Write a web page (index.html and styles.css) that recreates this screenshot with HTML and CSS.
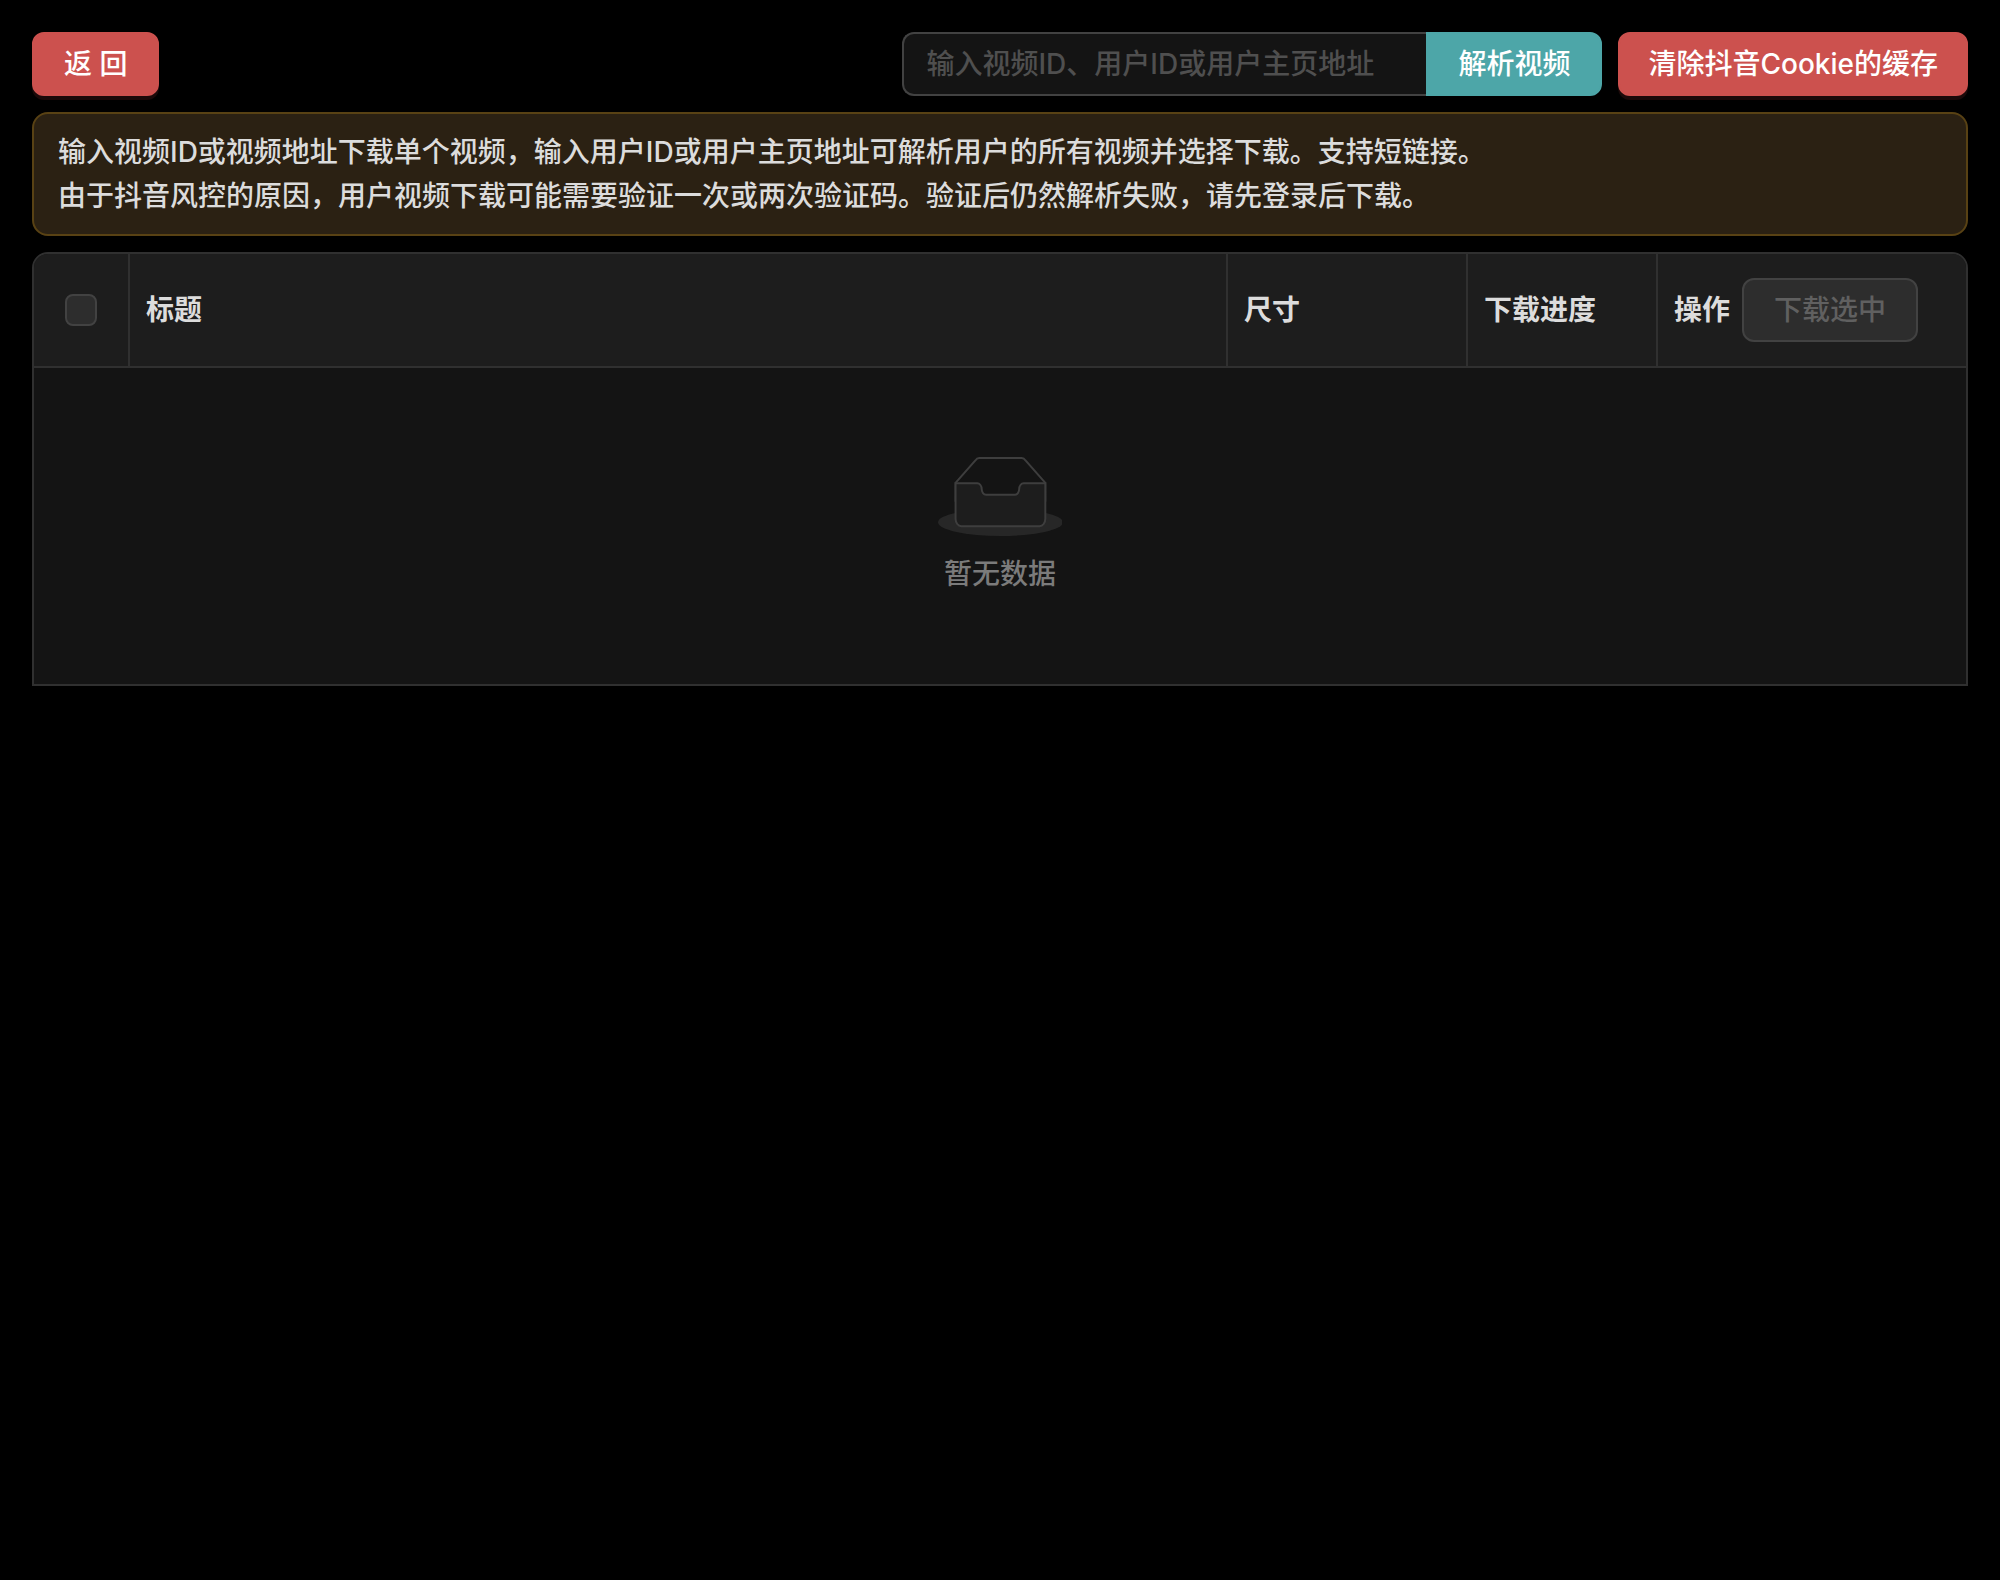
FILE: index.html
```
<!DOCTYPE html>
<html lang="zh-CN">
<head>
<meta charset="utf-8">
<meta name="viewport" content="width=device-width, initial-scale=1">
<title>抖音视频下载</title>
<link rel="stylesheet" href="styles.css">
</head>
<body>
<main class="page">
  <header class="toolbar">
    <button class="btn btn-danger" type="button">返 回</button>
    <form class="search">
      <input class="search-input" type="text" aria-label="视频地址" placeholder="输入视频ID、用户ID或用户主页地址">
      <button class="btn btn-primary" type="button">解析视频</button>
    </form>
    <button class="btn btn-danger btn-long" type="button">清除抖音Cookie的缓存</button>
  </header>

  <div class="alert" role="alert">
    <p>输入视频ID或视频地址下载单个视频，输入用户ID或用户主页地址可解析用户的所有视频并选择下载。支持短链接。</p>
    <p>由于抖音风控的原因，用户视频下载可能需要验证一次或两次验证码。验证后仍然解析失败，请先登录后下载。</p>
  </div>

  <div class="table-wrap">
    <table class="table">
      <colgroup>
        <col class="col-select">
        <col>
        <col class="col-size">
        <col class="col-progress">
        <col class="col-action">
      </colgroup>
      <thead>
        <tr>
          <th class="cell-select"><input class="checkbox" type="checkbox" aria-label="全选" disabled></th>
          <th>标题</th>
          <th>尺寸</th>
          <th>下载进度</th>
          <th>
            <div class="action">
              <span>操作</span>
              <button class="btn btn-disabled" type="button" disabled>下载选中</button>
            </div>
          </th>
        </tr>
      </thead>
      <tbody>
        <tr>
          <td class="empty" colspan="5">
            <svg class="empty-image" viewBox="0 0 64 41" aria-hidden="true">
              <g transform="translate(0 1)" fill="none" fill-rule="evenodd">
                <ellipse fill="#272727" cx="32" cy="33" rx="32" ry="7"/>
                <g fill-rule="nonzero" stroke="#3e3e3e">
                  <path d="M55 12.76L44.854 1.258C44.367.474 43.656 0 42.907 0H21.093c-.749 0-1.46.474-1.947 1.257L9 12.761V22h46v-9.24z"/>
                  <path d="M41.613 15.931c0-1.605.994-2.93 2.227-2.931H55v18.137C55 33.26 53.68 35 52.05 35h-40.1C10.32 35 9 33.259 9 31.137V13h11.16c1.233 0 2.227 1.323 2.227 2.928v.022c0 1.605 1.005 2.901 2.237 2.901h14.752c1.232 0 2.237-1.308 2.237-2.913v-.007z" fill="#1d1d1d"/>
                </g>
              </g>
            </svg>
            <p>暂无数据</p>
          </td>
        </tr>
      </tbody>
    </table>
  </div>
</main>
</body>
</html>
```
FILE: styles.css
```
* {
  box-sizing: border-box;
}

body {
  margin: 0;
  background: #000;
  color: #dcdcdc;
  font: 500 28px/44px Inter, "Noto Sans CJK SC", sans-serif;
}

p {
  margin: 0;
}

.page {
  display: flex;
  flex-direction: column;
  gap: 16px;
  padding: 32px;
}

.toolbar {
  display: flex;
  gap: 16px;
}

.btn {
  height: 64px;
  padding: 0 30px;
  border: 2px solid transparent;
  border-radius: 12px;
  font: inherit;
  font-weight: 500;
  white-space: nowrap;
}

.btn-long {
  padding: 0 28px;
}

.btn-danger {
  background: #cc514e;
  border-color: #cc514e;
  color: #fff;
  box-shadow: 0 4px 0 #1b0909;
}

.btn-primary {
  background: #4da6a8;
  border-color: #4da6a8;
  border-radius: 0 12px 12px 0;
  color: #fff;
}

.btn-disabled {
  background: #2d2d2d;
  border-color: #424242;
  color: #606060;
}

.search {
  display: flex;
  width: 700px;
  margin-left: auto;
}

.search-input {
  flex: 1;
  min-width: 0;
  height: 64px;
  padding: 0 22px;
  border: 2px solid #424242;
  border-right: 0;
  border-radius: 12px 0 0 12px;
  background: #141414;
  color: #dcdcdc;
  font: inherit;
}

.search-input::placeholder {
  color: #4f4f4f;
  opacity: 1;
}

.alert {
  padding: 16px 24px;
  border: 2px solid #594214;
  border-radius: 16px;
  background: #2b2113;
}

.table-wrap {
  overflow: hidden;
  border: 2px solid #303030;
  border-radius: 16px 16px 0 0;
  background: #141414;
}

.table {
  width: 100%;
  table-layout: fixed;
  border-spacing: 0;
}

.col-select {
  width: 96px;
}

.col-size {
  width: 240px;
}

.col-progress {
  width: 190px;
}

.col-action {
  width: 308px;
}

.table th {
  height: 114px;
  padding: 0 16px;
  border-right: 2px solid #303030;
  border-bottom: 2px solid #303030;
  background: #1d1d1d;
  font-weight: 700;
  text-align: left;
}

.table th:last-child {
  border-right: 0;
}

.table .cell-select {
  padding: 0;
  text-align: center;
}

.checkbox {
  display: block;
  width: 32px;
  height: 32px;
  margin: 0 auto;
  appearance: none;
  border: 2px solid #424242;
  border-radius: 8px;
  background: #2d2d2d;
}

.action {
  display: flex;
  align-items: center;
  gap: 12px;
}

.empty {
  padding: 88px 16px;
  color: #7b7b7b;
  text-align: center;
}

.empty-image {
  display: block;
  height: 80px;
  margin: 0 auto 16px;
}
```
